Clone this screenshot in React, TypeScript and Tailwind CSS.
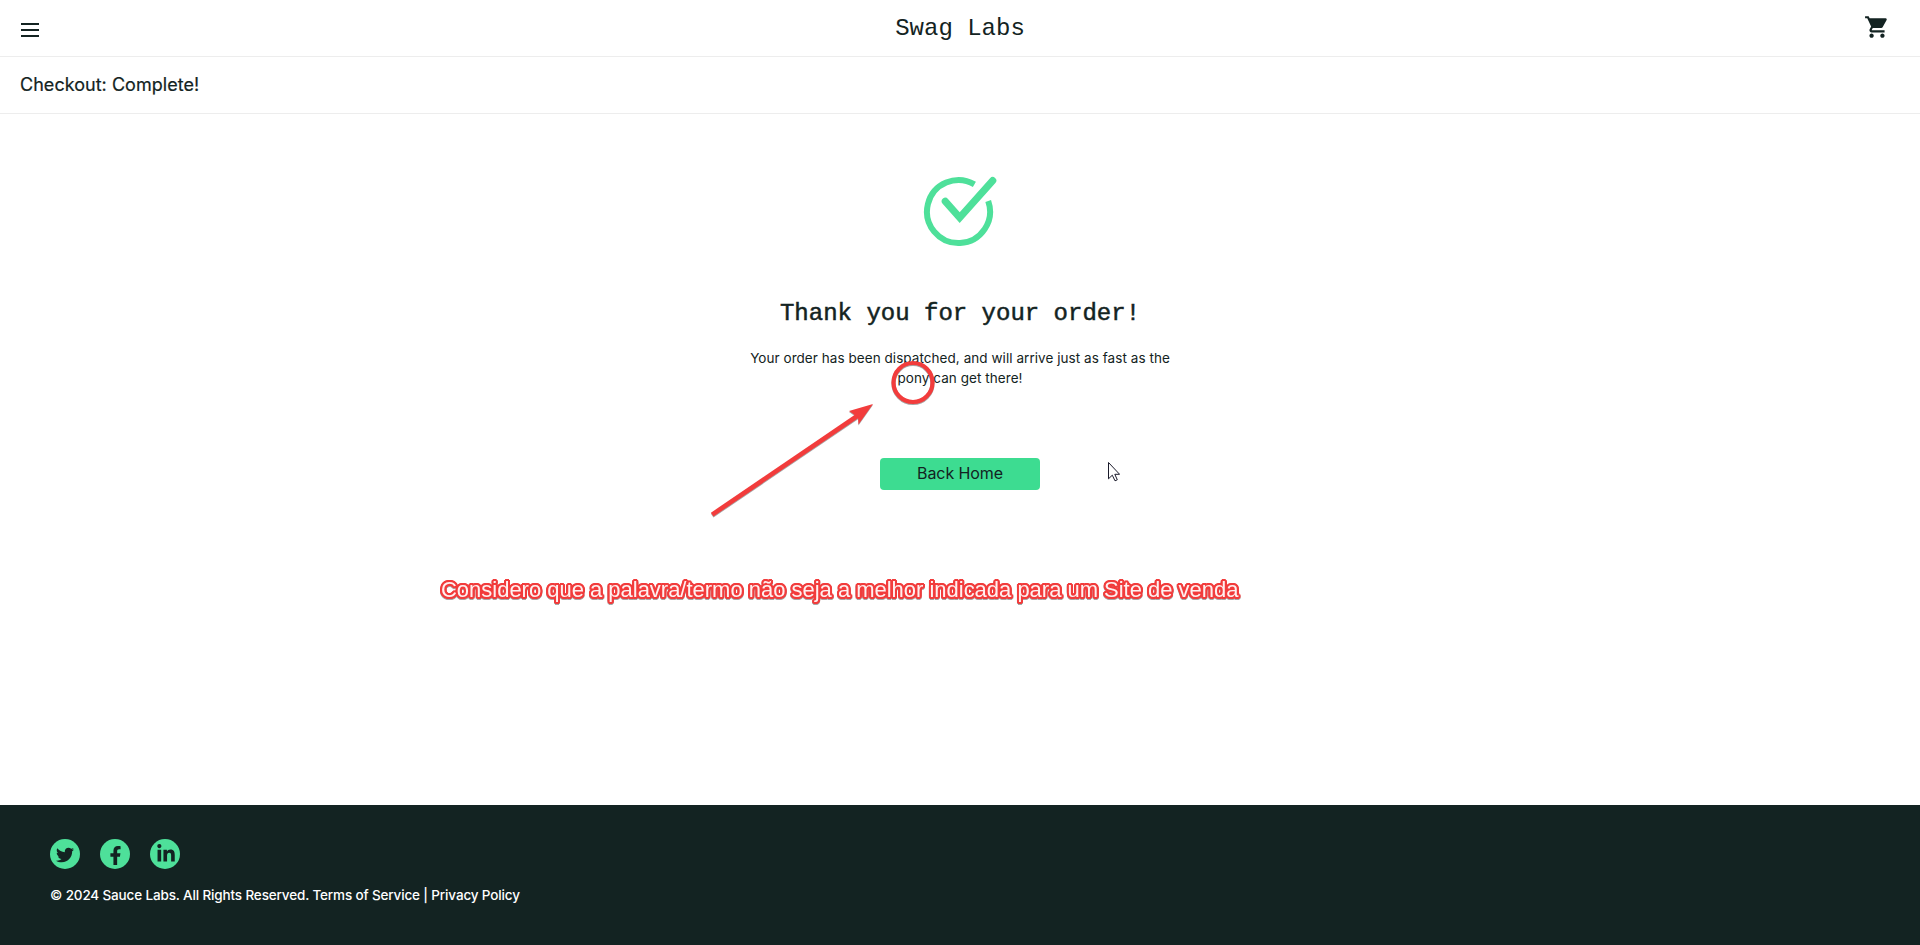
import React from "react";
import { FaTwitter, FaFacebookF, FaLinkedinIn } from "react-icons/fa";
import { MdShoppingCart } from "react-icons/md";

const socials = [
  { name: "Twitter", Icon: FaTwitter, size: "mt-px size-[18px]" },
  { name: "Facebook", Icon: FaFacebookF, size: "mt-0.5 size-[19px]" },
  { name: "LinkedIn", Icon: FaLinkedinIn, size: "ml-px size-[20px]" },
];

function Header() {
  return (
    <header>
      <div className="flex h-[57px] items-center justify-between border-b border-[#ededed] pl-[21px] pr-[30px]">
        <button aria-label="Open menu" className="mt-[3px] flex w-[60px] flex-col gap-1">
          <span className="h-0.5 w-[18px] bg-[#132322]" />
          <span className="h-0.5 w-[18px] bg-[#132322]" />
          <span className="h-0.5 w-[18px] bg-[#132322]" />
        </button>
        <div className="-ml-px mt-0.5 font-['Liberation_Mono',monospace] text-2xl leading-8">Swag Labs</div>
        <button aria-label="Cart" className="-mt-0.5 flex w-[50px] justify-end">
          <MdShoppingCart className="size-[26px]" />
        </button>
      </div>
      <div className="flex h-[57px] items-center border-b border-[#ededed] px-5">
        <h2 className="text-lg font-normal tracking-[0.03px] [-webkit-text-stroke:0.2px_#132322]">Checkout: Complete!</h2>
      </div>
    </header>
  );
}

function CheckMark() {
  return (
    <svg viewBox="0 0 76 72" className="h-[72px] w-[76px]" fill="none" stroke="#4ee09a">
      <path d="M52.4 8.4 A31.5 31.5 0 1 0 66.2 25.1" strokeWidth="6" />
      <path d="M23.3 25.3 L37.7 41.6 L70.7 4.6" strokeWidth="7.2" strokeLinecap="round" />
    </svg>
  );
}

function Annotations() {
  return (
    <>
      <svg viewBox="0 0 420 180" className="pointer-events-none absolute left-[700px] top-[350px] h-[180px] w-[420px]">
        <g className="drop-shadow-[0_1px_0.5px_rgba(0,0,0,0.35)]">
          <circle cx="213" cy="32.5" r="19.5" fill="none" stroke="#f23c3c" strokeWidth="4.2" />
          <path d="M12.2 164.6 L158 65.5" stroke="#f23c3c" strokeWidth="4.6" />
          <path d="M173 54 L149 61 L155 65.2 L158 67 L158.5 74.5 Z" fill="#f23c3c" />
        </g>
        <path
          d="M408.5 112.5 V128.8 L412.3 125.2 L415 130.8 L417.3 129.8 L414.8 124.3 H419.6 Z"
          fill="#fff"
          stroke="#1a1a2a"
          strokeWidth="1"
        />
      </svg>
      <p className="absolute left-[441px] top-[576px] whitespace-nowrap font-['Liberation_Sans',Arial,sans-serif] text-[22px] leading-7 tracking-[-0.015px] text-[#fff0f0] drop-shadow-[0_1px_0.5px_rgba(0,0,0,0.35)] [text-shadow:2px_0_#f23c3c,-2px_0_#f23c3c,0_2px_#f23c3c,0_-2px_#f23c3c,2px_1px_#f23c3c,2px_-1px_#f23c3c,-2px_1px_#f23c3c,-2px_-1px_#f23c3c,1px_2px_#f23c3c,-1px_2px_#f23c3c,1px_-2px_#f23c3c,-1px_-2px_#f23c3c,1px_1px_#f23c3c,-1px_-1px_#f23c3c]">
        Considero que a palavra/termo não seja a melhor indicada para um Site de venda
      </p>
    </>
  );
}

export default function App() {
  return (
    <div className="relative flex h-[945px] flex-col overflow-hidden bg-white font-['Inter',sans-serif] text-[#132322]">
      <Header />
      <main className="flex flex-1 flex-col items-center pt-[62px]">
        <CheckMark />
        <h1 className="mt-[50px] font-['Liberation_Mono',monospace] text-2xl leading-8 [-webkit-text-stroke:0.5px_#132322]">
          Thank you for your order!
        </h1>
        <p className="mt-[18px] text-center text-[13.5px] leading-5 tracking-[0.055px]">
          Your order has been dispatched, and will arrive just as fast as the
          <br />
          pony can get there!
        </p>
        <button className="mt-[70px] h-8 w-40 rounded bg-[#3ddc91] pb-0.5 text-base tracking-[-0.1px]">Back Home</button>
      </main>
      <footer className="h-[140px] bg-[#132322] px-[50px] pt-[34px] text-white">
        <ul className="flex gap-5">
          {socials.map(({ name, Icon, size }) => (
            <li key={name} aria-label={name} className="flex size-[30px] items-center justify-center rounded-full bg-[#4ee09a] text-[#132322]">
              <Icon className={size} />
            </li>
          ))}
        </ul>
        <p className="mt-4 text-[13.5px] font-[450] leading-5 tracking-[-0.145px]">© 2024 Sauce Labs. All Rights Reserved. Terms of Service | Privacy Policy</p>
      </footer>
      <Annotations />
    </div>
  );
}
